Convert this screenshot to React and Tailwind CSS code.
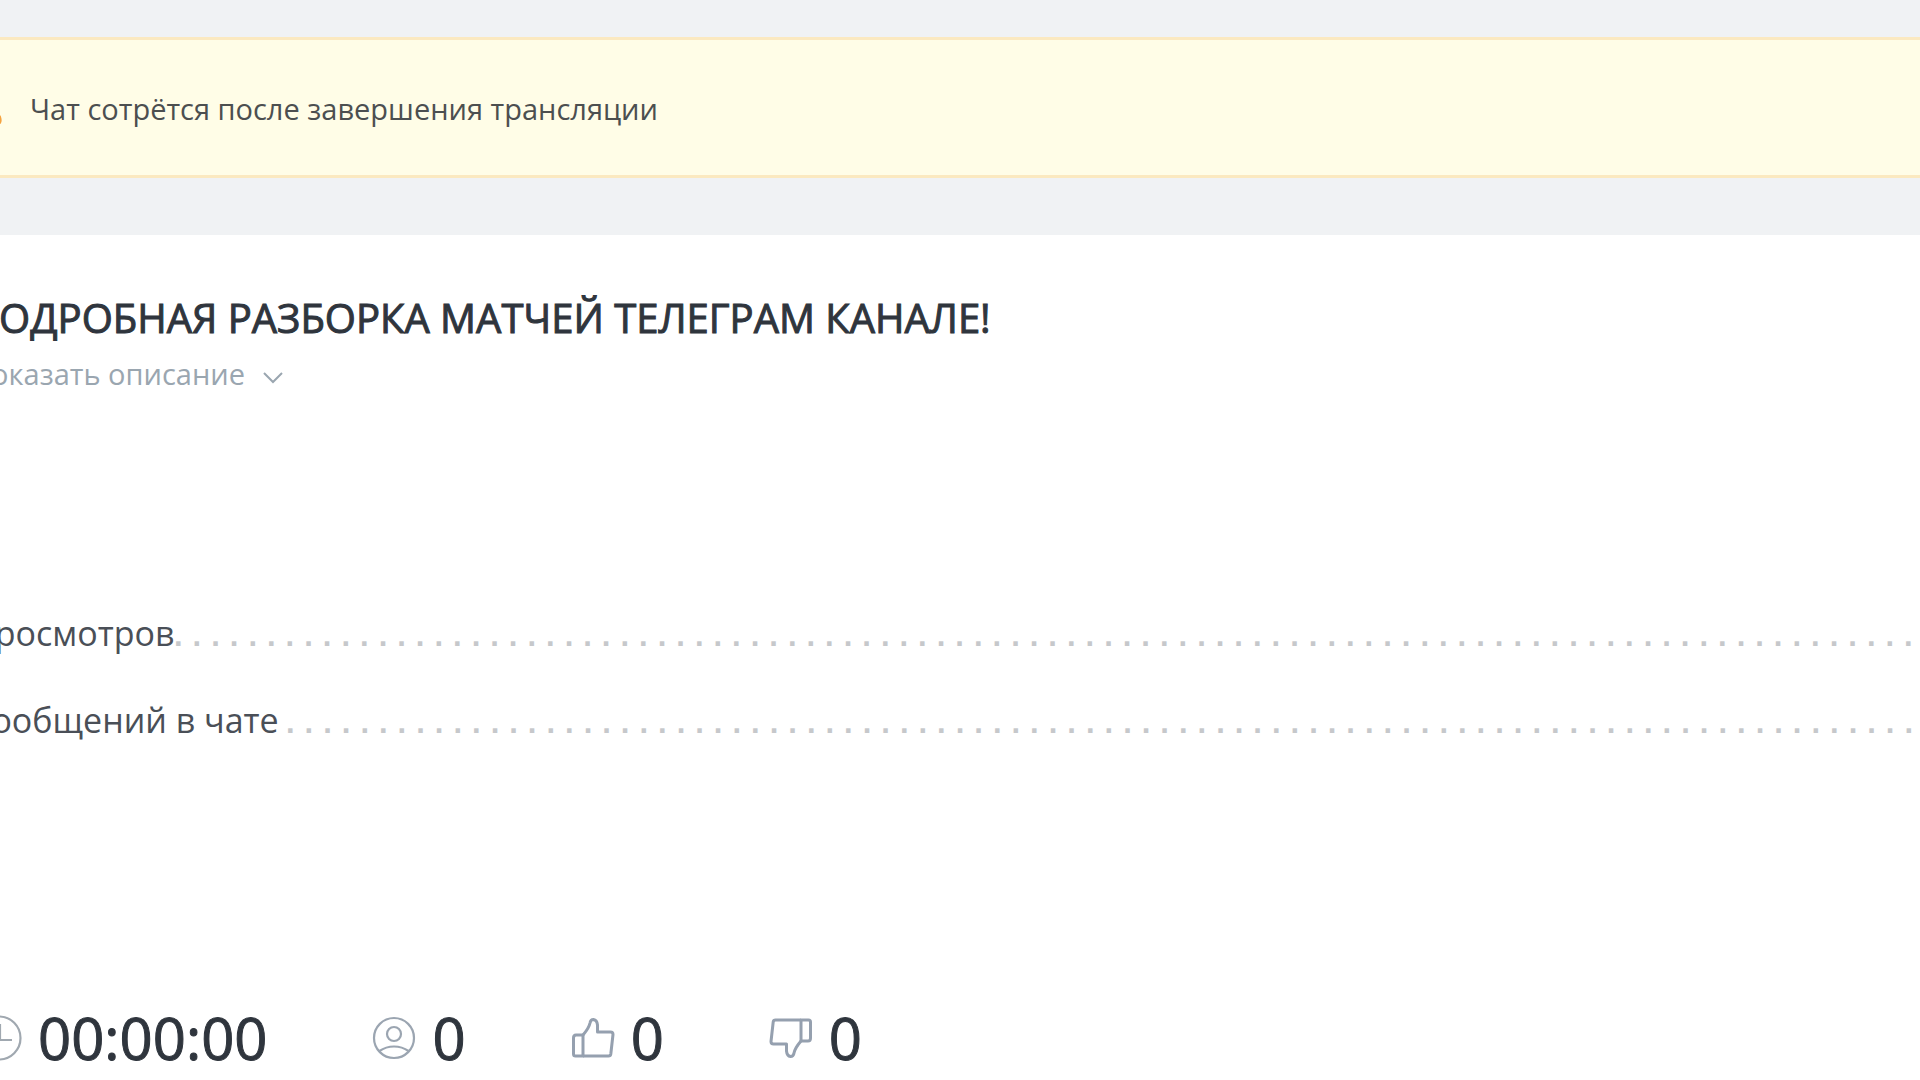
const LEADER = '.'.repeat(96);

function WarningIcon() {
  return (
    <svg className="size-11 shrink-0" viewBox="0 0 44 44" fill="none" aria-hidden="true">
      <path
        d="M18 5.500a4.500 4.500 0 0 1 8 0L41.500 30Q44 37 37 37.500H7Q0 37 2.500 30Z"
        stroke="#f5a340"
        strokeWidth="3"
      />
      <path d="M22 15v10M22 29v3" stroke="#f5a340" strokeWidth="3" />
    </svg>
  );
}

function ClockIcon() {
  return (
    <svg className="size-[46px]" viewBox="0 0 46 46" fill="none" stroke="#a0a8b0" strokeWidth="2.200" aria-hidden="true">
      <circle cx="23" cy="23" r="21.500" />
      <path d="M24 9v16H36" />
    </svg>
  );
}

function ViewerIcon() {
  return (
    <svg className="size-11" viewBox="0 0 44 44" fill="none" stroke="#9ba5b1" strokeWidth="2.200" aria-hidden="true">
      <circle cx="22" cy="22" r="20" />
      <circle cx="22" cy="18" r="7" />
      <path d="M7.500 35C16 29 28 29 36.500 35" />
    </svg>
  );
}

function ThumbIcon({ down = false }) {
  return (
    <svg
      className={down ? 'size-11 rotate-180' : 'size-11'}
      viewBox="0 0 44 44"
      fill="none"
      stroke="#95a0af"
      strokeWidth="3"
      strokeLinejoin="round"
      aria-hidden="true"
    >
      <path d="M12 40H4.500Q2.500 40 2.500 38V22Q2.500 19 5 19H12Z" />
      <path d="M12 40H37.500Q39.500 40 39.800 38L42 18.500Q42 16 39.500 16H26.500V9Q26 4 22.500 3.500Q19.500 3.500 19 7Q18 12 12 19" />
    </svg>
  );
}

function Stat({ icon, label, value }) {
  return (
    <li className="flex items-center gap-4" aria-label={label}>
      {icon}
      <span className="[-webkit-text-stroke:1px]">{value}</span>
    </li>
  );
}

function CounterRow({ label, labelWidth }) {
  return (
    <li className="flex items-baseline whitespace-nowrap">
      <span className={`shrink-0 ${labelWidth}`}>{label}</span>
      <span
        className="min-w-0 flex-1 overflow-hidden font-['Liberation_Mono',monospace] text-[31px] leading-8 font-bold text-[#c6c8cb]"
        aria-hidden="true"
      >
        {LEADER}
      </span>
    </li>
  );
}

export default function App() {
  return (
    <div className="flex min-h-screen flex-col overflow-hidden bg-[#f0f2f4] pt-[37px] font-['Open_Sans',sans-serif] text-[#2f353d]">
      <div
        role="status"
        className="-mx-[42px] flex items-center gap-7 border-y-[3px] border-[#fbe9c0] bg-[#fffde7] pt-[47px] pb-[44px] text-[29px] leading-11 text-[#4c4f50]"
      >
        <WarningIcon />
        <p>Чат сотрётся после завершения трансляции</p>
      </div>

      <main className="-mx-[30px] mt-[57px] flex-1 bg-white pt-[55px]">
        <h1 className="text-[40px] leading-14 [-webkit-text-stroke:1px]">ПОДРОБНАЯ РАЗБОРКА МАТЧЕЙ ТЕЛЕГРАМ КАНАЛЕ!</h1>
        <button type="button" className="mt-2 flex items-center gap-4 text-[29px] leading-10 text-[#9aa6b0]">
          Показать описание
          <svg className="mt-2 w-6" viewBox="0 0 24 14" fill="none" stroke="currentColor" strokeWidth="2" aria-hidden="true">
            <path d="M3 2l9 9 9-9" />
          </svg>
        </button>

        <ul className="mt-[215px] flex flex-col gap-[39px] text-[34px] leading-[48px] text-[#4a4f57]">
          <CounterRow label="Просмотров" labelWidth="w-[199px]" />
          <CounterRow label="Сообщений в чате" labelWidth="w-[311px]" />
        </ul>

        <ul className="mt-[258px] ml-[6px] flex gap-[105px] text-[58px] leading-[72px]">
          <Stat icon={<ClockIcon />} label="Длительность" value="00:00:00" />
          <Stat icon={<ViewerIcon />} label="Зрители" value="0" />
          <Stat icon={<ThumbIcon />} label="Нравится" value="0" />
          <Stat icon={<ThumbIcon down />} label="Не нравится" value="0" />
        </ul>
      </main>
    </div>
  );
}
